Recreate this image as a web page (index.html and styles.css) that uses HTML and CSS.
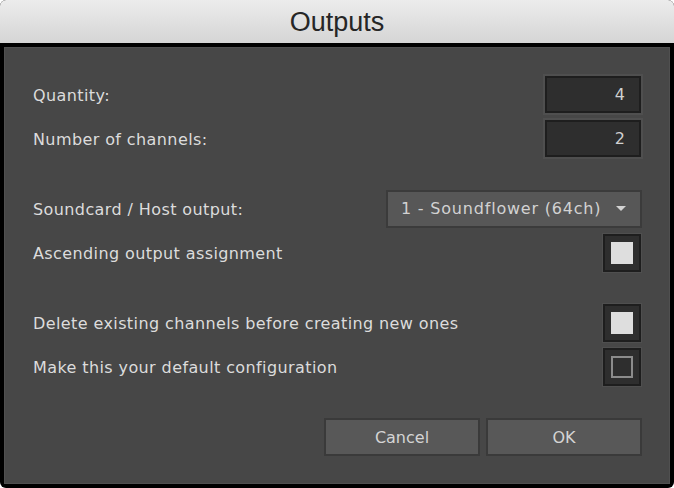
FILE: index.html
```html
<!DOCTYPE html>
<html lang="en">
<head>
  <meta charset="UTF-8" />
  <title>Outputs</title>
  <link rel="stylesheet" href="styles.css">
</head>
<body>
  <div class="window">
    <div class="titlebar">Outputs</div>
    <div class="frame">
      <div class="panel">
        <div class="group">
          <div class="row">
            <span class="label">Quantity:</span>
            <div class="number">4</div>
          </div>
          <div class="row">
            <span class="label">Number of channels:</span>
            <div class="number">2</div>
          </div>
        </div>

        <div class="group">
          <div class="row">
            <span class="label">Soundcard / Host output:</span>
            <div class="select">
              <span>1 - Soundflower (64ch)</span>
              <span class="arrow"></span>
            </div>
          </div>
          <div class="row">
            <span class="label">Ascending output assignment</span>
            <div class="check on"><span class="mark"></span></div>
          </div>
        </div>

        <div class="group">
          <div class="row">
            <span class="label">Delete existing channels before creating new ones</span>
            <div class="check on"><span class="mark"></span></div>
          </div>
          <div class="row">
            <span class="label">Make this your default configuration</span>
            <div class="check"><span class="mark"></span></div>
          </div>
        </div>

        <div class="buttons">
          <button class="btn">Cancel</button>
          <button class="btn">OK</button>
        </div>
      </div>
    </div>
  </div>
</body>
</html>
```

FILE: styles.css
```css
html, body {
  margin: 0;
  padding: 0;
  background: #fff;
}
.window {
  width: 674px;
  height: 488px;
  background: #000;
  border-radius: 6px;
  overflow: hidden;
  display: flex;
  flex-direction: column;
}
.titlebar {
  height: 43px;
  flex-shrink: 0;
  box-sizing: border-box;
  padding-top: 2px;
  background: linear-gradient(#ececec, #d5d5d5);
  color: #262626;
  font-family: "Liberation Sans", Arial, sans-serif;
  font-size: 27px;
  line-height: 41px;
  text-align: center;
}
.frame {
  flex: 1;
  padding: 4px;
  display: flex;
}
.panel {
  flex: 1;
  background: #474747;
  border: 1px solid #505050;
  padding: 27px 27px 0 28px;
  display: flex;
  flex-direction: column;
  gap: 31px;
  font-family: "DejaVu Sans", sans-serif;
  font-size: 16px;
  color: #dcdcdc;
}
.group {
  display: flex;
  flex-direction: column;
  gap: 5px;
}
.row {
  display: flex;
  align-items: center;
  justify-content: space-between;
  height: 39px;
}
.label {
  letter-spacing: 0.4px;
  padding-top: 1px;
}
.number {
  width: 78px;
  height: 33px;
  box-sizing: content-box;
  border: 2px solid #1e1e1e;
  box-shadow: 0 0 0 2px #4f4f4f;
  background: #2e2e2e;
  color: #d0d0d0;
  text-align: right;
  padding: 0 14px 0 0;
  line-height: 33px;
  margin-right: 1px;
}
.select {
  box-sizing: border-box;
  width: 256px;
  height: 38px;
  border: 2px solid #3b3b3b;
  background: #575757;
  color: #d2d2d2;
  display: flex;
  align-items: center;
  justify-content: space-between;
  padding: 0 14px 0 13px;
  letter-spacing: 0.8px;
}
.arrow {
  width: 0;
  height: 0;
  border-left: 5px solid transparent;
  border-right: 5px solid transparent;
  border-top: 5px solid #d2d2d2;
}
.check {
  width: 38px;
  height: 38px;
  box-sizing: border-box;
  border: 2px solid #1e1e1e;
  box-shadow: 0 0 0 1px #4f4f4f;
  background: #2e2e2e;
  display: flex;
  align-items: center;
  justify-content: center;
  margin-right: 1px;
}
.mark {
  width: 22px;
  height: 22px;
  box-sizing: border-box;
  border: 2px solid #8c8c8c;
}
.check.on .mark {
  background: #dedede;
  border-color: #dedede;
}
.buttons {
  display: flex;
  justify-content: flex-end;
  gap: 6px;
  margin-top: 1px;
}
.btn {
  width: 156px;
  height: 38px;
  border: 2px solid #3a3a3a;
  background: #585858;
  color: #d4d4d4;
  font-family: "DejaVu Sans", sans-serif;
  font-size: 16px;
  padding: 0;
}
```
